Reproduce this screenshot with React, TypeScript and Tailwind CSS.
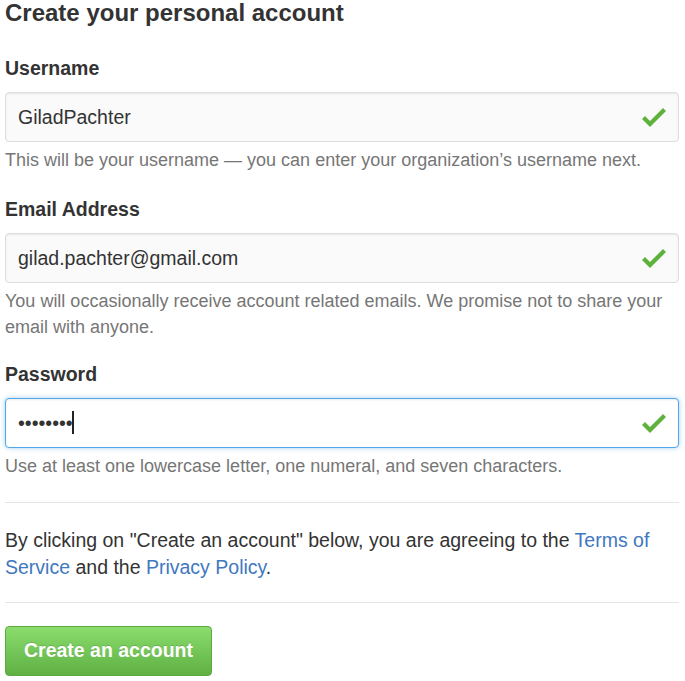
import { FC } from "react";

const CheckIcon: FC = () => (
  <svg
    viewBox="0 0 12 16"
    width={24}
    height={32}
    className="absolute right-[13px] top-1/2 -translate-y-1/2"
    fill="#5cb23a"
  >
    <path d="M12 5l-8 8-4-4 1.5-1.5L4 10l6.5-6.5L12 5z" />
  </svg>
);

const Field: FC<{
  label: string;
  value: string;
  type?: string;
  focused?: boolean;
  note: string;
  className?: string;
}> = ({ label, value, type = "text", focused, note, className }) => (
  <div className={className}>
    <label className="block text-[19.5px] font-bold leading-[27px] text-[#333]">
      {label}
    </label>
    <div className="relative mt-[10px]">
      <input
        type={type}
        defaultValue={value}
        readOnly
        className={
          focused
            ? "block h-[50px] w-full rounded-[4px] border border-[#51a7e8] bg-white pl-[12px] pr-[50px] text-[19.5px] text-[#333] shadow-[inset_0_1px_2px_rgba(0,0,0,0.075),0_0_5px_rgba(81,167,232,0.5)] outline-none"
            : "block h-[50px] w-full rounded-[4px] border border-[#ddd] bg-[#fafafa] pl-[12px] pr-[50px] text-[19.5px] text-[#333] shadow-[inset_0_1px_2px_rgba(0,0,0,0.075)] outline-none"
        }
      />
      {focused && (
        <span className="absolute left-[67px] top-[13px] h-[23px] w-[1.5px] bg-[#222]" />
      )}
      <CheckIcon />
    </div>
    <p className="mt-[5px] text-[18px] leading-[26px] text-[#767676]">{note}</p>
  </div>
);

export default function App() {
  return (
    <div
      className="w-[685px] bg-white pl-[5px] pr-[6px] text-[#333]"
      style={{ fontFamily: '"Liberation Sans", Arial, sans-serif' }}
    >
      <h2 className="text-[24px] font-bold leading-[26px]">Create your personal account</h2>

      <Field
        className="mt-[29px]"
        label="Username"
        value="GiladPachter"
        note="This will be your username — you can enter your organization’s username next."
      />
      <Field
        className="mt-[23px]"
        label="Email Address"
        value="gilad.pachter@gmail.com"
        note="You will occasionally receive account related emails. We promise not to share your email with anyone."
      />
      <Field
        className="mt-[21px]"
        label="Password"
        value="password"
        type="password"
        focused
        note="Use at least one lowercase letter, one numeral, and seven characters."
      />

      <hr className="mt-[23px] border-t border-[#e5e5e5]" />

      <p className="mt-[24px] text-[19.5px] leading-[27px] text-[#333]">
        By clicking on "Create an account" below, you are agreeing to the{" "}
        <a className="text-[#4078c0]">Terms of Service</a> and the{" "}
        <a className="text-[#4078c0]">Privacy Policy</a>.
      </p>

      <hr className="mt-[21px] border-t border-[#e5e5e5]" />

      <button className="mt-[23px] mb-[6px] h-[50px] w-[207px] rounded-[4px] border border-[#5ca941] bg-gradient-to-b from-[#8add6d] to-[#60b044] text-[19.5px] font-bold text-white [text-shadow:0_-1px_0_rgba(0,0,0,0.15)]">
        Create an account
      </button>
    </div>
  );
}
